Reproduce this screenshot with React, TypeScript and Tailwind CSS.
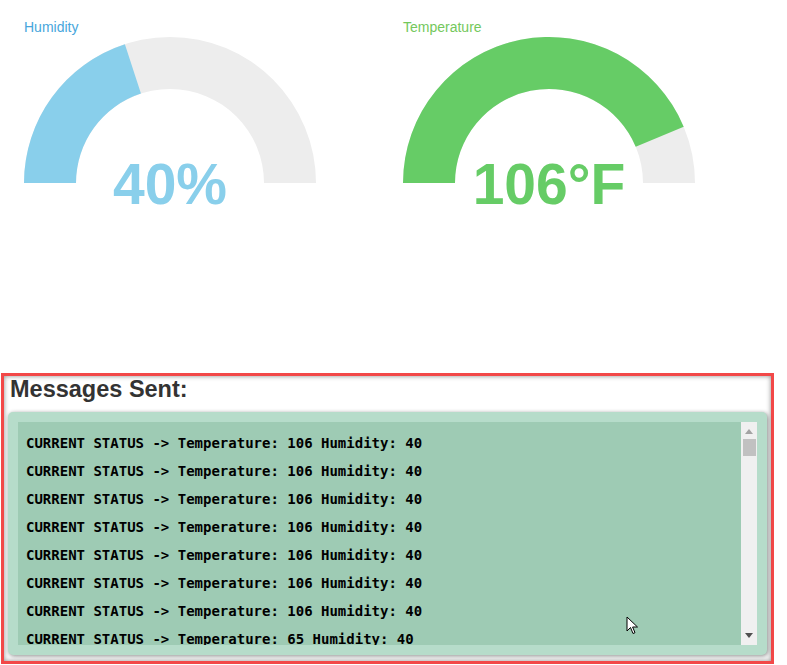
import React from 'react';

interface GaugeProps {
  label: string;
  value: string;
  fraction: number;
  color: string;
  labelClass: string;
  valueClass: string;
}

const R = 146;
const r = 94;
const cx = 146;
const cy = 146;

const Gauge: React.FC<GaugeProps> = ({ label, value, fraction, color, labelClass, valueClass }) => {
  const t = Math.PI * (1 - fraction);
  const ox = cx + R * Math.cos(t);
  const oy = cy - R * Math.sin(t);
  const ix = cx + r * Math.cos(t);
  const iy = cy - r * Math.sin(t);

  const track = `M 0 ${cy} A ${R} ${R} 0 0 1 ${cx * 2} ${cy} L ${cx + r} ${cy} A ${r} ${r} 0 0 0 ${cx - r} ${cy} Z`;
  const fill = `M 0 ${cy} A ${R} ${R} 0 0 1 ${ox} ${oy} L ${ix} ${iy} A ${r} ${r} 0 0 0 ${cx - r} ${cy} Z`;

  return (
    <div className="w-[379px] pl-6 pt-[19px]">
      <p className={`text-[14px] leading-4 ${labelClass}`}>{label}</p>
      <svg width={292} height={180} className="mt-[2px] overflow-visible">
        <path d={track} fill="#ededed" />
        <path d={fill} fill={color} />
        <text
          x={cx}
          y={167}
          textAnchor="middle"
          fontSize={57}
          fontWeight="bold"
          fontFamily="'Liberation Sans', Arial, sans-serif"
          className={valueClass}
        >
          {value}
        </text>
      </svg>
    </div>
  );
};

const messages = [
  'CURRENT STATUS -> Temperature: 106 Humidity: 40',
  'CURRENT STATUS -> Temperature: 106 Humidity: 40',
  'CURRENT STATUS -> Temperature: 106 Humidity: 40',
  'CURRENT STATUS -> Temperature: 106 Humidity: 40',
  'CURRENT STATUS -> Temperature: 106 Humidity: 40',
  'CURRENT STATUS -> Temperature: 106 Humidity: 40',
  'CURRENT STATUS -> Temperature: 106 Humidity: 40',
  'CURRENT STATUS -> Temperature: 65 Humidity: 40',
];

export default function App() {
  return (
    <div className="relative w-[787px] h-[665px] bg-white overflow-hidden font-['Liberation_Sans',Arial,sans-serif]">
      <div className="flex h-[373px]">
        <Gauge
          label="Humidity"
          value="40%"
          fraction={0.4}
          color="#89cfeb"
          labelClass="text-[#47a6dc]"
          valueClass="fill-[#89cfeb]"
        />
        <Gauge
          label="Temperature"
          value="106°F"
          fraction={0.874}
          color="#66cc66"
          labelClass="text-[#74c85c]"
          valueClass="fill-[#66cc66]"
        />
      </div>

      {/* messages panel */}
      <div className="ml-[1px] w-[773px] h-[291px] border-[3px] border-[#f24848] shadow-[inset_0_0_5px_rgba(0,0,0,0.45)] flex flex-col">
        <h2 className="pl-[6px] pt-0 text-[23.5px] leading-[27px] font-bold text-[#333333]">Messages Sent:</h2>
        <div className="mt-[9px] mx-[4px] h-[243px] rounded-[5px] bg-[#b6dcca] p-[10px] shadow-[1px_1px_4px_rgba(0,0,0,0.45)]">
          <div className="flex h-full bg-[#9ecbb4]">
            <div className="flex-1 overflow-hidden pl-[8px] pt-[7px] font-['DejaVu_Sans_Mono',monospace] text-[14px] font-bold leading-[28px] text-black whitespace-pre">
              {messages.map((m, i) => (
                <div key={i}>{m}</div>
              ))}
            </div>
            {/* scrollbar */}
            <div className="w-[16px] bg-[#f0f0f0] flex flex-col items-center">
              <svg width={8} height={5} className="mt-[7px]">
                <polygon points="0,5 4,0 8,5" fill="#a3a3a3" />
              </svg>
              <div className="mt-[5px] w-[13px] h-[17px] bg-[#c1c1c1]" />
              <div className="flex-1" />
              <svg width={8} height={5} className="mb-[7px]">
                <polygon points="0,0 8,0 4,5" fill="#505050" />
              </svg>
            </div>
          </div>
        </div>
      </div>

      {/* mouse cursor */}
      <svg width={14} height={20} viewBox="0 0 14 20" className="absolute left-[626px] top-[616px]">
        <path d="M1 1 L1 15 L4.5 11.5 L7 17.5 L9 16.7 L6.6 11 L11.5 11 Z" fill="#ffffff" stroke="#000000" strokeWidth="1" strokeLinejoin="miter" />
      </svg>
    </div>
  );
}
